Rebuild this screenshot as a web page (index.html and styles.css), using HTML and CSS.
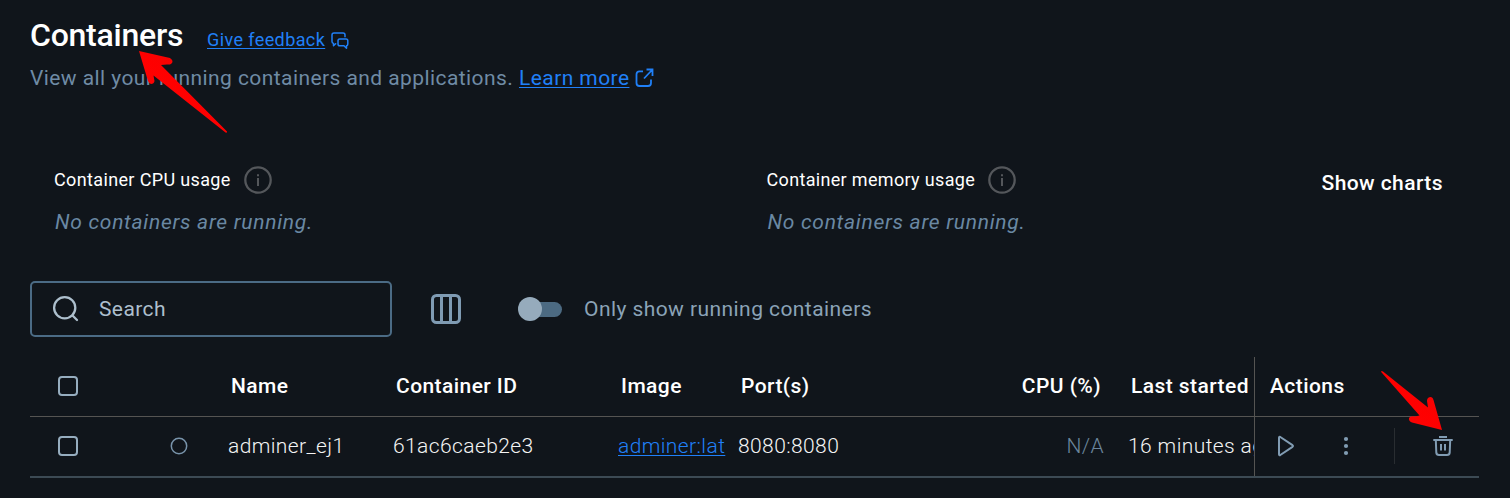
FILE: index.html
```html
<!DOCTYPE html>
<html lang="en">
<head>
<meta charset="utf-8">
<title>Containers</title>
<link rel="stylesheet" href="styles.css">
</head>
<body>
<main class="page">
  <header class="heading">
    <h1 class="title">Containers</h1>
    <a class="feedback">Give feedback</a>
    <svg class="feedback-icon" width="18" height="18" viewBox="0 0 18 18" fill="none" stroke="currentColor" stroke-width="1.5" stroke-linejoin="round"><path d="M5.3 11.8H4.6L2.5 13.8V11.4Q1 11 1 9.500V3Q1 1 3 1H12Q14 1 14 3V5.200"/><path d="M8.700 7H15Q16.800 7 16.800 8.800V12Q16.800 13.500 15.500 13.700V16.200L13 13.800H8.700Q7 13.800 7 12V8.800Q7 7 8.700 7Z"/></svg>
  </header>
  <p class="intro"><span class="intro-text">View all your running containers and applications.</span><a class="learn">Learn more</a><svg class="external" width="20" height="20" viewBox="0 0 20 20" fill="none" stroke="currentColor" stroke-width="1.8"><path d="M8 3.300H4.500Q1.500 3.300 1.500 6.300V15Q1.500 18 4.500 18H13Q16 18 16 15V11.500M11.500 1.500H17.500V8M17.500 1.500L9 10.500"/></svg></p>

  <section class="usage">
    <div class="metric">
      <div class="metric-head"><span class="metric-name">Container CPU usage</span><svg class="info" width="28" height="28" viewBox="0 0 28 28"><circle cx="14" cy="14" r="12.700" fill="none" stroke="currentColor" stroke-width="2.300"/><path d="M13 8.300h2v2h-2zM13 12h2v8h-2z" fill="currentColor"/></svg></div>
      <em class="metric-empty">No containers are running.</em>
    </div>
    <div class="metric">
      <div class="metric-head"><span class="metric-name">Container memory usage</span><svg class="info" width="28" height="28" viewBox="0 0 28 28"><circle cx="14" cy="14" r="12.700" fill="none" stroke="currentColor" stroke-width="2.300"/><path d="M13 8.300h2v2h-2zM13 12h2v8h-2z" fill="currentColor"/></svg></div>
      <em class="metric-empty">No containers are running.</em>
    </div>
    <span class="show-charts">Show charts</span>
  </section>

  <section class="toolbar">
    <div class="search">
      <svg width="28" height="28" viewBox="0 0 28 28" fill="none" stroke="currentColor" stroke-width="2.300" stroke-linecap="round"><circle cx="12.700" cy="12.700" r="10.600"/><path d="M20.500 20.500L25 25"/></svg>
      <span class="search-label">Search</span>
    </div>
    <svg class="columns" width="30" height="30" viewBox="0 0 30 30" fill="none" stroke="currentColor" stroke-width="3"><rect x="1.500" y="1.500" width="27" height="27" rx="4"/><path d="M10.500 1.300V28.700M19.500 1.300V28.700"/></svg>
    <div class="switch"><i class="knob"></i></div>
    <span class="switch-label">Only show running containers</span>
  </section>

  <section class="table">
    <div class="row head">
      <div class="check"><i class="box"></i></div>
      <div></div>
      <div class="cell">Name</div>
      <div class="cell">Container ID</div>
      <div class="cell">Image</div>
      <div class="cell">Port(s)</div>
      <div class="cell right">CPU (%)</div>
      <div class="cell">Last started</div>
      <div class="cell actions-head">Actions</div>
    </div>
    <div class="row item">
      <div class="check"><i class="box"></i></div>
      <div class="status"><svg width="18" height="18" viewBox="0 0 18 18"><circle cx="9" cy="9" r="7.700" fill="none" stroke="currentColor" stroke-width="1.500"/></svg></div>
      <div class="cell">adminer_ej1</div>
      <div class="cell">61ac6caeb2e3</div>
      <div class="cell"><a class="image-link">adminer:lat</a></div>
      <div class="cell">8080:8080</div>
      <div class="cell right na">N/A</div>
      <div class="cell">16 minutes ago</div>
      <div class="actions">
        <svg class="play" width="18" height="22" viewBox="0 0 18 22" fill="none" stroke="currentColor" stroke-width="2" stroke-linejoin="round"><path d="M2 2.700Q2 1.300 3.300 2L15.500 10.200Q16.500 11 15.500 11.800L3.300 20Q2 20.700 2 19.300Z"/></svg>
        <svg class="dots" width="6" height="20" viewBox="0 0 6 20" fill="currentColor"><circle cx="3" cy="3" r="2.100"/><circle cx="3" cy="10" r="2.100"/><circle cx="3" cy="17" r="2.100"/></svg>
        <i class="divider"></i>
        <svg class="trash" width="20" height="20" viewBox="0 0 20 20" fill="none" stroke="currentColor" stroke-width="2"><path d="M6 1H14M.3 4H19.700M2.800 4L3.300 16.700Q3.500 19 6 19H14Q16.500 19 16.700 16.700L17.200 4M8 8V14.500M12 8V14.500"/></svg>
      </div>
    </div>
  </section>

  <svg class="arrows" width="1510" height="498" viewBox="0 0 1510 498">
    <defs><linearGradient id="red" x1="0" y1="1" x2="1" y2="0"><stop offset="0" stop-color="#f80808"/><stop offset=".5" stop-color="#ff0000"/><stop offset="1" stop-color="#e90808"/></linearGradient></defs>
    <path fill="url(#red)" d="M139 51L170 58Q173 60 172.500 62Q171.500 65 167 64.500L161 65L227 131.500Q227.500 133 225.500 132.500L153.500 75.500L154.500 81Q154 84 151 84Q149 83.500 148 81Z"/>
    <path fill="url(#red)" d="M1442 430L1412 422.500Q1408.500 421 1409 418Q1410 415.500 1415 416.500L1419.500 415.500L1381.200 372Q1381 370.500 1383 371.500L1428 407.500L1427 401Q1427 397 1431 397Q1433 397.500 1433.500 400Z"/>
  </svg>
</main>
</body>
</html>
```
FILE: styles.css
```css
* { box-sizing: border-box; }
body { margin: 0; background: #10151b; font-family: Roboto, "Liberation Sans", sans-serif; overflow: hidden; }
.page { width: 1510px; height: 498px; padding: 0 31px 0 30px; font-size: 21px; line-height: 24px; color: #fff; white-space: nowrap; position: relative; }
svg { display: block; flex: none; }

.heading { display: flex; height: 60px; padding-top: 14px; }
.title { margin: 0; width: 177px; font-size: 32px; line-height: 42px; font-weight: 500; letter-spacing: -.25px; }
.feedback { margin-top: 14px; width: 118px; font-size: 18px; color: #2080f8; text-decoration: underline; text-decoration-thickness: 1px; text-underline-offset: 2px; letter-spacing: .4px; }
.feedback-icon { margin: 18px 0 0 6px; color: #2080f8; }

.intro { margin: 6px 0 0; display: flex; height: 24px; color: #6f8ba5; letter-spacing: .42px; }
.intro-text { width: 489px; }
.learn { width: 110px; color: #2080f8; text-decoration: underline; text-decoration-thickness: 1px; text-underline-offset: 2px; }
.external { margin: 2px 0 0 6px; color: #2080f8; }

.usage { display: flex; height: 191px; padding: 76px 0 0 24px; }
.metric { width: 712.5px; }
.metric-head { display: flex; align-items: center; height: 28px; gap: 13px; font-size: 18px; }
.metric-name { letter-spacing: .36px; }
.metric + .metric .metric-name { letter-spacing: .33px; }
.info { color: #54575b; }
.metric-empty { display: block; margin: 16px 0 0 1px; line-height: 24px; color: #6a88a3; letter-spacing: .71px; }
.show-charts { margin: 5px 0 0 -157.5px; font-weight: 500; letter-spacing: .42px; }

.toolbar { display: flex; align-items: center; height: 56px; color: #7f9bb3; }
.search { display: flex; align-items: center; width: 362px; height: 56px; padding-left: 20px; border: 2px solid #4b6b85; border-radius: 5px; gap: 19px; color: #adbfcd; }
.search-label { letter-spacing: .4px; }
.columns { margin-left: 39px; }
.switch { width: 41px; height: 15px; margin-left: 60px; border-radius: 8px; background: #4c6a82; display: flex; align-items: center; }
.knob { width: 24px; height: 24px; flex: none; margin-left: -3px; border-radius: 50%; background: #96abbc; }
.switch-label { margin-left: 22px; letter-spacing: .43px; color: #8ba3b7; }

.table { margin-top: 20px; width: 1449px; }
.row { display: grid; grid-template-columns: 118px 80px 165px 225px 120px 250px 140px 126px 225px; height: 60px; }
.row > * { display: flex; align-items: center; overflow: hidden; padding-bottom: 1px; }
.head { font-weight: 500; letter-spacing: .43px; border-bottom: 1px solid #555452; }
.head .cell { padding-left: 3px; }
.item { height: 61px; border-bottom: 2px solid #3c4a54; font-weight: 300; letter-spacing: .4px; color: #f4f4f4; }
.check { padding-left: 28px; }
.box { width: 20px; height: 20px; border: 2px solid #96adbf; border-radius: 4px; }
.status { padding-left: 22px; color: #7893aa; }
.row .right { justify-content: flex-end; padding-right: 24px; }
.head .right { padding-right: 27px; }
.na { color: #6b859c; }
.image-link { color: #2080f8; text-decoration: underline; text-decoration-thickness: 1px; text-underline-offset: 2px; }
.actions-head, .actions { border-left: 1px solid #555452; }
.head .actions-head { padding-left: 15px; }
.actions { color: #819cb3; }
.play { margin-left: 22px; }
.dots { margin-left: 48px; }
.divider { width: 1px; height: 36px; margin-left: 45px; background: #292d31; }
.trash { margin-left: 38px; }
.arrows { position: absolute; left: 0; top: 0; pointer-events: none; }
```
